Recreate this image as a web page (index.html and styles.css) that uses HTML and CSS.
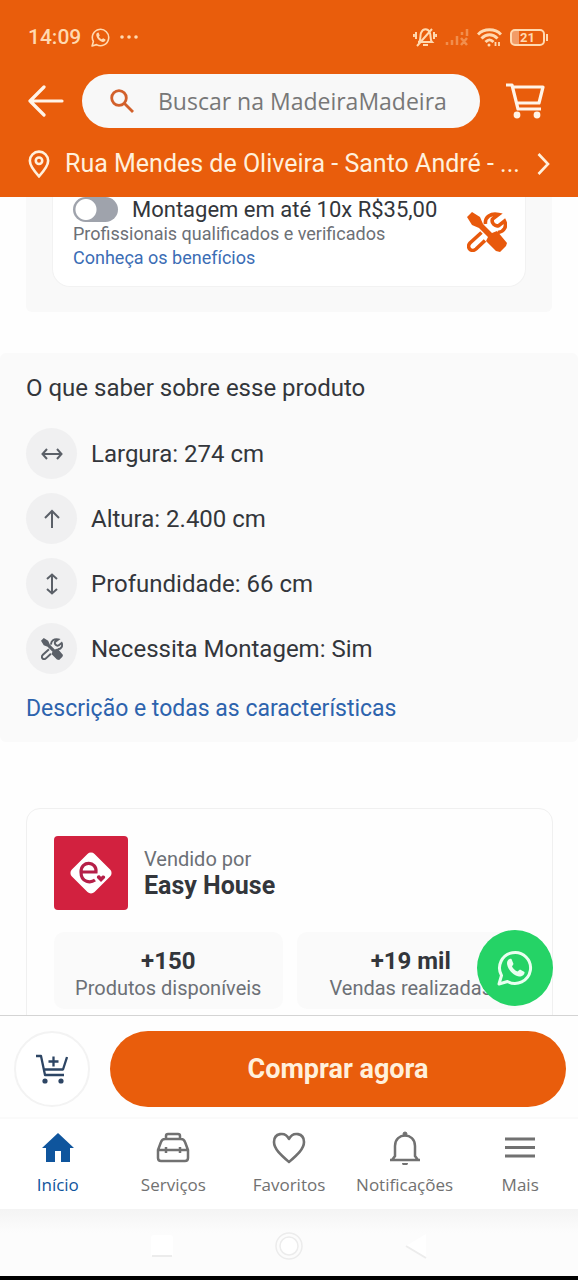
FILE: index.html
```html
<!DOCTYPE html>
<html lang="pt-BR">
<head>
<meta charset="utf-8">
<meta name="viewport" content="width=device-width, initial-scale=1">
<title>MadeiraMadeira</title>
<link rel="stylesheet" href="styles.css">
</head>
<body>
<svg class="sprite" aria-hidden="true">
  <symbol id="tools" viewBox="0 0 40 40">
    <path d="M0 5 5 0 13 5 16 12 25 21 30 19 40 31 39 34 33 40 29 39 19 29 21 25 12 16 5 13Z" fill="currentColor"/>
    <path d="M18.500 12C17.500 5 24 .800 31.500 2.500L25.500 7C24 11 28 15 32 13.500L37.500 9C40 14 37.500 19.500 31 20.500M14.500 20.500 3 31C-1 35.500 4.500 41 9 37L18 28.500" fill="none" stroke="currentColor" stroke-width="3.600"/>
  </symbol>
  <symbol id="whatsapp" viewBox="0 0 36 36">
    <path d="M2 34 4.500 25.500A15.500 15.500 0 1 1 10.500 31.500Z" fill="none" stroke="currentColor" stroke-width="3" stroke-linejoin="round"/>
    <path d="M10 13c0-3 3-5 4.500-4l2 5-1.500 2.500c1.500 2.500 3 4 5.500 5l2.500-2 4.500 2.500c.500 3-3 5-5.500 4.500C15 25 10 18 10 13Z" fill="currentColor"/>
  </symbol>
</svg>
<div class="app">
  <header class="header">
    <div class="status">
      <div class="status-group">
        <span class="time">14:09</span>
        <svg width="19" height="19"><use href="#whatsapp"/></svg>
        <svg width="18" height="4" viewBox="0 0 18 4" fill="currentColor"><circle cx="2" cy="2" r="1.800"/><circle cx="9" cy="2" r="1.800"/><circle cx="16" cy="2" r="1.800"/></svg>
      </div>
      <div class="status-group status-right">
        <svg width="24" height="22" viewBox="0 0 24 22" fill="none" stroke="currentColor" stroke-width="2"><path d="M6 16c2-2 1-7 2-9 2-5 7-5 9 0 1 3 0 7 2 9H5M10 19h5M4 20 19 3M3 6v7M.900 8v3M21 6v7M23.100 8v3"/></svg>
        <svg class="dim" width="24" height="18" viewBox="0 0 24 18" fill="none" stroke="currentColor" stroke-width="2.500"><path d="M2 17v-3M7 17v-5M12 17V8M17 7V4M22 8V1M16 10l6 7M22 10l-6 7"/></svg>
        <svg width="25" height="19" viewBox="0 0 25 19" fill="none" stroke="currentColor" stroke-width="3"><path d="M1 6.500C7 .300 18 .300 24 6.500M4.500 10.500c5-5 11-5 16 0M8.500 14c3-3 5-3 8 0"/><circle cx="12" cy="17" r="1.500" fill="currentColor" stroke="none"/><path d="M18.500 14v4M22 14v4" stroke-width="1.800"/></svg>
        <span class="battery"><span>21</span></span>
      </div>
    </div>
    <div class="search-row">
      <button class="icon-button" aria-label="Voltar"><svg width="36" height="32" viewBox="0 0 36 32" fill="none" stroke="currentColor" stroke-width="3.200" stroke-linecap="round" stroke-linejoin="round"><path d="M34 16H2M16 2 2 16l14 14"/></svg></button>
      <label class="search">
        <svg width="24" height="24" viewBox="0 0 24 24" fill="none" stroke="currentColor" stroke-width="2.800"><circle cx="9" cy="9" r="7.300"/><path d="m14 14 9 9"/></svg>
        <input type="text" placeholder="Buscar na MadeiraMadeira" aria-label="Buscar na MadeiraMadeira">
      </label>
      <button class="icon-button" aria-label="Carrinho"><svg width="39" height="36" viewBox="0 0 39 36" fill="none" stroke="currentColor" stroke-width="3.200" stroke-linejoin="round"><path d="M0 2h6l6 24h23M7 4h30l-4 16H11"/><circle cx="11" cy="32" r="3.400" fill="currentColor" stroke="none"/><circle cx="31" cy="32" r="3.400" fill="currentColor" stroke="none"/></svg></button>
    </div>
    <button class="address">
      <svg width="22" height="28" viewBox="0 0 20 26" fill="none" stroke="currentColor" stroke-width="2.400"><path d="M10 24.500C5 19 1.500 14.500 1.500 10a8.500 8.500 0 0 1 17 0c0 4.500-3.500 9-8.500 14.500Z"/><circle cx="10" cy="10" r="3"/></svg>
      <span>Rua Mendes de Oliveira - Santo André - ...</span>
      <svg width="13" height="22" viewBox="0 0 13 22" fill="none" stroke="currentColor" stroke-width="2.600"><path d="m1.500 1 9.500 10-9.500 10"/></svg>
    </button>
  </header>

  <main class="content">
    <section class="assembly">
      <div class="assembly-card">
        <div class="assembly-text">
          <label class="toggle-row"><input class="toggle" type="checkbox" role="switch"><span>Montagem em até 10x R$35,00</span></label>
          <p class="note">Profissionais qualificados e verificados</p>
          <a class="note note-link" href="#">Conheça os benefícios</a>
        </div>
        <svg class="tools-large" width="40" height="40"><use href="#tools"/></svg>
      </div>
    </section>

    <section class="facts">
      <h2>O que saber sobre esse produto</h2>
      <ul>
        <li><span class="disc"><svg width="22" height="12" viewBox="0 0 22 12" fill="none" stroke="currentColor" stroke-width="2"><path d="M2 6h18M6 1 1.500 6 6 11M16 1l4.500 5-4.500 5"/></svg></span><span>Largura: <b>274 cm</b></span></li>
        <li><span class="disc"><svg width="18" height="20" viewBox="0 0 18 20" fill="none" stroke="currentColor" stroke-width="2"><path d="M9 19V2M2 9l7-7 7 7"/></svg></span><span>Altura: <b>2.400 cm</b></span></li>
        <li><span class="disc"><svg width="12" height="22" viewBox="0 0 12 22" fill="none" stroke="currentColor" stroke-width="2"><path d="M6 2v18M1 6l5-4.500L11 6M1 16l5 4.500 5-4.500"/></svg></span><span>Profundidade: <b>66 cm</b></span></li>
        <li><span class="disc"><svg width="22" height="22"><use href="#tools"/></svg></span><span>Necessita Montagem: <b>Sim</b></span></li>
      </ul>
      <a href="#">Descrição e todas as características</a>
    </section>

    <section class="seller">
      <div class="seller-head">
        <div class="logo"><svg width="46" height="46" viewBox="0 0 46 46"><rect x="7" y="7" width="32" height="32" rx="5" fill="#fff" transform="rotate(45 23 23)"/><path d="M14 22h14c1-11-15-12-15 0 0 11 10 11 14 8" fill="none" stroke="#b51f48" stroke-width="3.200"/><path d="m33 32-4-4c-1-3 3-4 4-1 2-3 5-1 4 1Z" fill="#b51f48"/></svg></div>
        <div><p class="sold-by">Vendido por</p><p class="seller-name">Easy House</p></div>
      </div>
      <div class="stats">
        <div class="stat"><strong>+150</strong><span>Produtos disponíveis</span></div>
        <div class="stat"><strong>+19 mil</strong><span>Vendas realizadas</span></div>
      </div>
    </section>
    <button class="chat" aria-label="WhatsApp"><svg width="36" height="36"><use href="#whatsapp"/></svg></button>
  </main>

  <div class="buy-bar">
    <button class="add" aria-label="Adicionar ao carrinho"><svg width="32" height="30" viewBox="0 0 32 30" fill="none" stroke="currentColor" stroke-width="2.300" stroke-linejoin="round"><path d="M0 2h5l4 19h19M7 15.500h20l4-12.500M17.500 2.500v10M12.500 7.500h10"/><circle cx="9" cy="27" r="2.600" fill="currentColor" stroke="none"/><circle cx="25" cy="27" r="2.600" fill="currentColor" stroke="none"/></svg></button>
    <button class="buy">Comprar agora</button>
  </div>

  <nav class="tabs">
    <a class="active" href="#"><svg width="34" height="34" viewBox="0 0 34 34" fill="currentColor"><path d="M17 2 33 17h-4v14h-9V20h-6v11H5V17H1Z"/></svg>Início</a>
    <a href="#"><svg width="34" height="34" viewBox="0 0 34 34" fill="none" stroke="currentColor" stroke-width="2.500" stroke-linejoin="round"><path d="M10 8V5q0-2 2-2h10q2 0 2 2v3M9 8h16q3 0 4 3l3 8v8q0 3-3 3H5q-3 0-3-3v-8l3-8q1-3 4-3ZM2 19h30M10 16v6M24 16v6"/></svg>Serviços</a>
    <a href="#"><svg width="34" height="34" viewBox="0 0 34 34" fill="none" stroke="currentColor" stroke-width="2.600" stroke-linejoin="round"><path d="M17 31C9 24 2 18 2 11 2 2 13 0 17 8 21 0 32 2 32 11c0 7-7 13-15 20Z"/></svg>Favoritos</a>
    <a href="#"><svg width="34" height="34" viewBox="0 0 34 34" fill="none" stroke="currentColor" stroke-width="2.500"><path d="M2 29h30M4 29l3-4V15C7 1 27 1 27 15v10l3 4"/><circle cx="17" cy="3" r="2" fill="currentColor" stroke-width="1"/><path d="M14 32a3 2.500 0 0 0 6 0Z" fill="currentColor" stroke="none"/></svg>Notificações</a>
    <a href="#"><svg width="34" height="34" viewBox="0 0 34 34" fill="none" stroke="currentColor" stroke-width="2.800"><path d="M2 8h30M2 16.500h30M2 25h30"/></svg>Mais</a>
  </nav>

  <div class="system">
    <svg width="26" height="28" viewBox="0 0 26 28" fill="none" stroke="currentColor" stroke-width="2"><rect x="2" y="3" width="22" height="22" rx="3" fill="#fff" stroke="none"/><path d="M3 24h20"/></svg>
    <svg width="28" height="28" viewBox="0 0 28 28" fill="none" stroke="currentColor" stroke-width="1.500"><circle cx="14" cy="14" r="13"/><circle cx="14" cy="14" r="9" fill="#fff"/></svg>
    <svg width="26" height="28" viewBox="0 0 26 28" fill="none" stroke="currentColor" stroke-width="2"><path d="M23 2v24L3 14Z" fill="#fff" stroke="none"/><path d="m3 14 20 12"/></svg>
  </div>
</div>
</body>
</html>
```

FILE: styles.css
```css
* { box-sizing: border-box; }
body, h2, p, ul { margin: 0; padding: 0; }
ul { list-style: none; }
a { color: #2d63ad; text-decoration: none; }
button { border: 0; padding: 0; background: none; color: inherit; font: inherit; }
svg { display: block; flex: none; }
.sprite { display: none; }

body {
  background: #fefefe;
  color: #33363b;
  font-family: Roboto, "Noto Sans", sans-serif;
  font-size: 24px;
}
.app { display: flex; flex-direction: column; height: 100vh; }

.header {
  flex: none;
  padding: 24px 28px 18px;
  background: #e95d0c;
  color: #fff0dc;
}
.status { display: flex; justify-content: space-between; align-items: center; height: 26px; }
.status-group { display: flex; align-items: center; gap: 10px; color: #ffd9b0; }
.status-right { gap: 8px; margin-right: 5px; }
.time { font-size: 21px; font-weight: 500; }
.dim { opacity: .4; }
.battery {
  position: relative;
  display: flex;
  align-items: center;
  justify-content: center;
  width: 35px;
  height: 17px;
  border: 2px solid;
  border-radius: 5px;
  background: linear-gradient(90deg, #f29c66 7px, transparent 7px);
  font-size: 13px;
  font-weight: 700;
}
.battery::after {
  content: "";
  position: absolute;
  right: -5px;
  width: 2px;
  height: 7px;
  background: currentColor;
}
.search-row { display: flex; align-items: center; gap: 18px; margin: 24px 5px 0 0; }
.icon-button { color: #fff4e8; }
.search {
  display: flex;
  flex: 1;
  align-items: center;
  gap: 24px;
  min-width: 0;
  height: 54px;
  padding: 0 16px 0 28px;
  border-radius: 27px;
  background: #f8f8f8;
  color: #d2602b;
}
.search-row .icon-button:last-child { margin-left: 8px; }
.search input {
  flex: 1;
  min-width: 0;
  padding: 0;
  border: 0;
  outline: 0;
  background: none;
  font: 23px "Open Sans", sans-serif;
}
.search input::placeholder { color: #777; opacity: 1; }
.address {
  display: flex;
  align-items: center;
  gap: 15px;
  width: 100%;
  margin-top: 20px;
  font-size: 25px;
  line-height: 31px;
  text-align: left;
}
.address span { flex: 1; min-width: 0; overflow: hidden; white-space: nowrap; }

.content { position: relative; flex: 1; min-height: 0; overflow: hidden; }
.assembly { margin: 0 26px; padding: 0 26px 25px; background: #f9f9f9; border-radius: 0 0 6px 6px; }
.assembly-card {
  display: flex;
  align-items: center;
  justify-content: space-between;
  padding: 0 18px 16px 20px;
  border: 1px solid #f2f2f2;
  border-top: 0;
  border-radius: 0 0 18px 18px;
  background: #fff;
}
.assembly-text { white-space: nowrap; }
.toggle-row { display: flex; align-items: center; gap: 14px; height: 25px; font-size: 22px; }
.toggle {
  flex: none;
  width: 45px;
  height: 25px;
  margin: 0;
  appearance: none;
  border-radius: 13px;
  background: radial-gradient(circle at 13px 50%, #fff 10px, #9fa3ac 11px);
}
.note { display: block; color: #6c7076; font-size: 18px; line-height: 24px; }
.note-link { color: #3b6db5; }
.tools-large { color: #e8590c; margin-top: -4px; }

.facts { margin-top: 41px; padding: 20px 26px 18px; border-radius: 6px; background: #fafafa; }
.facts h2 { font-size: 24px; font-weight: 400; line-height: 30px; }
.facts ul { display: grid; gap: 14px; margin: 25px 0 20px; }
.facts li { display: flex; align-items: center; gap: 14px; }
.facts b { font-weight: 400; }
.disc { display: grid; place-items: center; width: 51px; height: 51px; border-radius: 50%; background: #f0f0f1; color: #5b6068; }
.facts a { display: block; font-size: 23px; line-height: 30px; }

.seller { margin: 66px 25px 0 26px; padding: 27px; border: 1px solid #f0f0f0; border-radius: 14px; }
.seller-head { display: flex; align-items: center; gap: 16px; }
.logo { display: grid; place-items: center; width: 74px; height: 74px; border-radius: 4px; background: #d2213f; }
.sold-by { color: #6c7076; font-size: 20px; line-height: 26px; }
.seller-name { font-size: 25px; font-weight: 700; line-height: 28px; }
.stats { display: grid; grid-template-columns: 1fr 1fr; gap: 14px; margin-top: 22px; }
.stat { padding: 16px 8px 7px; border-radius: 10px; background: #fafafa; text-align: center; white-space: nowrap; }
.stat strong, .stat span { display: block; line-height: 27px; }
.stat span { color: #6c7076; font-size: 20px; }
.chat {
  position: absolute;
  right: 25px;
  bottom: 9px;
  display: grid;
  place-items: center;
  width: 76px;
  height: 76px;
  border-radius: 50%;
  background: #25d366;
  color: #e9fff0;
}

.buy-bar { display: flex; flex: none; gap: 20px; padding: 15px 12px 10px 14px; border-top: 1px solid #d4d4d4; background: #fefefe; }
.add { display: grid; place-items: center; width: 76px; height: 76px; border: 2px solid #f3f3f3; border-radius: 50%; background: #fff; color: #2d4564; }
.buy { flex: 1; border-radius: 38px; background: #e95d0c; color: #fff0dc; font-size: 27px; font-weight: 700; }

.tabs { display: grid; flex: none; grid-template-columns: repeat(5, 1fr); padding: 12px 0; border-top: 2px solid #fafafa; background: #fff; }
.tabs a { display: flex; flex-direction: column; align-items: center; gap: 8px; color: #717171; font: 17px/24px "Open Sans", sans-serif; }
.tabs .active { color: #0f559d; }
.system {
  display: flex;
  flex: none;
  justify-content: center;
  gap: 100px;
  padding: 23px 0 16px;
  border-bottom: 4px solid #000;
  background: linear-gradient(#f4f4f4, #fcfcfc 24px);
  color: #ececec;
}
```
